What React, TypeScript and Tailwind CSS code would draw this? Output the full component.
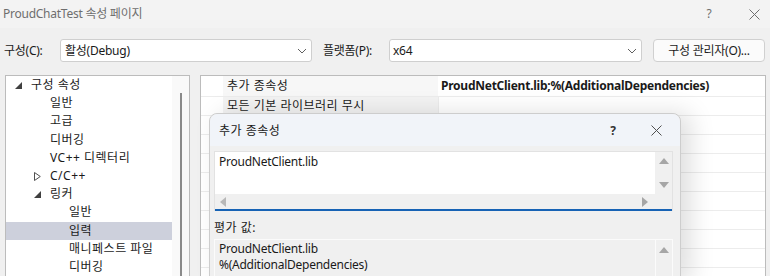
const font = { fontFamily: '"Segoe UI", "Noto Sans", "Noto Sans CJK KR", sans-serif' };

function Chevron() {
  return (
    <svg width="10" height="6" viewBox="0 0 10 6" className="shrink-0">
      <polyline points="1,1 5,5 9,1" fill="none" stroke="#606060" strokeWidth="1" />
    </svg>
  );
}

function Tri({ dir, color = "#a6a6a6" }: { dir: "up" | "down" | "left" | "right"; color?: string }) {
  const pts = {
    up: "0,6 5,0 10,6",
    down: "0,0 10,0 5,6",
    left: "6,0 6,10 0,5",
    right: "0,0 0,10 6,5",
  }[dir];
  const vert = dir === "up" || dir === "down";
  return (
    <svg width={vert ? 10 : 6} height={vert ? 6 : 10} viewBox={vert ? "0 0 10 6" : "0 0 6 10"}>
      <polygon points={pts} fill={color} />
    </svg>
  );
}

function Expanded() {
  return (
    <svg width="7" height="7" viewBox="0 0 7 7" className="shrink-0">
      <polygon points="7,0 7,7 0,7" fill="#404040" />
    </svg>
  );
}

function Collapsed() {
  return (
    <svg width="7" height="9" viewBox="0 0 7 9" className="shrink-0">
      <polygon points="0.5,0.5 0.5,8.5 6.3,4.5" fill="none" stroke="#505050" strokeWidth="1" />
    </svg>
  );
}

function Close({ color = "#505050" }: { color?: string }) {
  return (
    <svg width="11" height="11" viewBox="0 0 11 11">
      <path d="M0.5 0.5 L10.5 10.5 M10.5 0.5 L0.5 10.5" stroke={color} strokeWidth="1" />
    </svg>
  );
}

type TreeItem = { label: string; indent: number; icon?: "open" | "closed"; selected?: boolean };

const tree: TreeItem[] = [
  { label: "구성 속성", indent: 0, icon: "open" },
  { label: "일반", indent: 1 },
  { label: "고급", indent: 1 },
  { label: "디버깅", indent: 1 },
  { label: "VC++ 디렉터리", indent: 1 },
  { label: "C/C++", indent: 1, icon: "closed" },
  { label: "링커", indent: 1, icon: "open" },
  { label: "일반", indent: 2 },
  { label: "입력", indent: 2, selected: true },
  { label: "매니페스트 파일", indent: 2 },
  { label: "디버깅", indent: 2 },
];

export default function App() {
  return (
    <div className="relative w-[770px] h-[276px] overflow-hidden bg-[#f0f0f0] text-[12px] text-[#1a1a1a] tracking-[-0.25px]" style={font}>
      {/* title bar */}
      <div className="h-[28px] flex items-center bg-[#f3f3f3] pl-[3px]">
        <span className="text-[#6e6e6e] flex-1">ProudChatTest 속성 페이지</span>
        <span className="text-[#6e6e6e] w-[14px] mr-[33px] text-center">?</span>
        <span className="mr-[10px]"><Close color="#6e6e6e" /></span>
      </div>

      {/* config row */}
      <div className="h-[47px] flex items-center pl-[4px] pb-[2px]">
        <span className="w-[56px]">구성(C):</span>
        <div className="w-[252px] h-[23px] flex items-center justify-between bg-white border border-[#cfcfcf] rounded-[3px] pl-[4px] pr-[4px]">
          <span>활성(Debug)</span>
          <Chevron />
        </div>
        <span className="ml-[11px] w-[66px]">플랫폼(P):</span>
        <div className="w-[253px] h-[23px] flex items-center justify-between bg-white border border-[#cfcfcf] rounded-[3px] pl-[3px] pr-[4px]">
          <span>x64</span>
          <Chevron />
        </div>
        <div className="ml-[11px] w-[112px] h-[23px] flex items-center justify-center bg-[#fbfbfb] border border-[#d0d0d0] rounded-[4px]">
          구성 관리자(O)...
        </div>
      </div>

      {/* main area */}
      <div className="flex pl-[5px] gap-[10px]">
        {/* tree */}
        <div className="w-[185px] h-[210px] flex bg-white border border-[#bcbcbc] border-b-0">
          <div className="w-[166px] flex flex-col">
            {tree.map((t, i) => (
              <div
                key={i}
                className={`h-[18.2px] flex items-center ${t.selected ? "bg-[#cdd0dc]" : ""}`}
                style={{ paddingLeft: 9 + t.indent * 19 }}
              >
                <span className="w-[16px] flex items-center">
                  {t.icon === "open" && <Expanded />}
                  {t.icon === "closed" && <Collapsed />}
                </span>
                <span className="tracking-[0.5px]">{t.label}</span>
              </div>
            ))}
          </div>
          <div className="flex-1 bg-[#f9f9f9] flex justify-center pt-[17px]">
            <div className="w-[2px] h-full bg-[#8a8a8a]" />
          </div>
        </div>

        {/* property grid */}
        <div className="w-[566px] h-[210px] flex flex-col bg-white border border-[#bcbcbc] border-b-0">
          <div className="h-[21px] flex border-b border-[#ececec]">
            <div className="w-[22px]" />
            <div className="w-[215px] flex items-center pl-[4px] bg-[#f7f7f7] tracking-[0.5px]">추가 종속성</div>
            <div className="flex-1 flex items-center pl-[3px] font-bold">ProudNetClient.lib;%(AdditionalDependencies)</div>
          </div>
          <div className="h-[19px] flex border-b border-[#ececec]">
            <div className="w-[22px]" />
            <div className="w-[215px] flex items-center pl-[4px] bg-[#f3f3f3] tracking-[0.5px]">모든 기본 라이브러리 무시</div>
            <div className="flex-1 border-l border-[#ececec]" />
          </div>
          {[0, 1, 2, 3, 4, 5, 6, 7].map((i) => (
            <div key={i} className="h-[19px] flex border-b border-[#ececec]">
              <div className="w-[237px]" />
              <div className="flex-1 border-l border-[#ececec]" />
            </div>
          ))}
        </div>
      </div>

      {/* dialog */}
      <div className="absolute left-[209px] top-[113px] w-[472px] h-[170px] flex flex-col bg-[#f0f0f0] border border-[#cdcdcd] rounded-t-[8px] shadow-[10px_0_24px_rgba(0,0,0,0.13)]">
        <div className="h-[32px] shrink-0 flex items-center pl-[9px] pt-[1px] bg-[#f1f4f9] rounded-t-[8px]">
          <span className="flex-1 tracking-[0.5px]">추가 종속성</span>
          <span className="w-[10px] mr-[33px] font-bold text-[#333] text-center">?</span>
          <span className="mr-[18px]"><Close /></span>
        </div>

        <div className="pl-[4px] pr-[7px] pt-[5px]">
          <div className="flex flex-col border-t border-x border-[#e2e2e2]">
            <div className="h-[42px] flex">
              <div className="flex-1 bg-white pl-[4px] pt-[2px] leading-[16px]">ProudNetClient.lib</div>
              <div className="w-[17px] flex flex-col items-center justify-between py-[6px]">
                <Tri dir="up" />
                <Tri dir="down" />
              </div>
            </div>
            <div className="h-[15px] flex items-center justify-between pl-[5px] pr-[24px]">
              <Tri dir="left" color="#b8b8b8" />
              <Tri dir="right" />
            </div>
            <div className="h-[2px] bg-[#1763b5]" />
          </div>

          <div className="h-[28px] pt-[9px] leading-[16px] tracking-[0.5px]">평가 값:</div>

          <div className="h-[50px] flex border border-[#fbfbfb]">
            <div className="flex-1 flex flex-col pl-[4px] pt-[1px] leading-[16px]">
              <span>ProudNetClient.lib</span>
              <span>%(AdditionalDependencies)</span>
            </div>
            <div className="w-[17px] border-l border-[#fbfbfb] flex flex-col items-center justify-between pt-[7px] pb-[6px]">
              <Tri dir="up" />
              <Tri dir="down" />
            </div>
          </div>
        </div>
      </div>
    </div>
  );
}
